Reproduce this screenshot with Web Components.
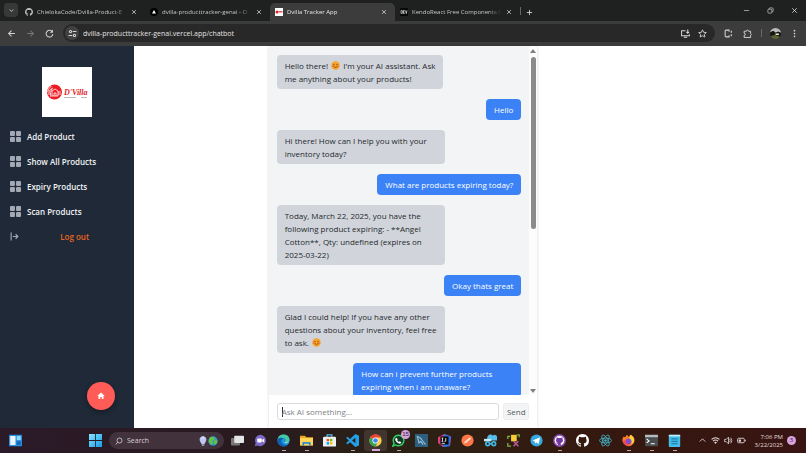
<!DOCTYPE html>
<html lang="en">
<head>
<meta charset="UTF-8">
<meta name="viewport" content="width=device-width, initial-scale=1.0">
<title>Dvilla Tracker App</title>
<style>
    :root {
        --sidebar-color: #1f2937;
        --primary-color: #3b82f6;
        --bot-color: #d1d5db;
        --accent-color: #ff5c57;
    }
    html, body {
        margin: 0;
        height: 100%;
        overflow: hidden;
    }
    body {
        font-family: "Open Sans", "Noto Sans", sans-serif;
        font-size: 8px;
        background: #fff;
    }
</style>
</head>
<body>
<desktop-screen></desktop-screen>

<script>
const icons = {
    down: '<path d="M4 6l4 4 4-4" fill="none" stroke="currentColor" stroke-width="2"/>',
    up: '<path d="M3 10l5-5 5 5" fill="none" stroke="currentColor" stroke-width="1.5"/>',
    github: '<path fill="currentColor" d="M8 0C3.58 0 0 3.58 0 8c0 3.54 2.29 6.53 5.47 7.59.4.07.55-.17.55-.38v-1.49c-2.01.37-2.53-.49-2.69-.94-.09-.23-.48-.94-.82-1.13-.28-.15-.68-.52-.01-.53.63-.01 1.08.58 1.23.82.72 1.21 1.87.87 2.33.66.07-.52.28-.87.51-1.07-1.78-.2-3.64-.89-3.64-3.95 0-.87.31-1.59.82-2.15-.08-.2-.36-1.02.08-2.12 0 0 .67-.21 2.2.82A7.6 7.6 0 0 1 8 3.86c.68 0 1.36.09 2 .27 1.53-1.04 2.2-.82 2.2-.82.44 1.1.16 1.92.08 2.12.51.56.82 1.27.82 2.15 0 3.07-1.87 3.75-3.65 3.95.29.25.54.73.54 1.48v2.2c0 .21.15.46.55.38A8 8 0 0 0 16 8c0-4.42-3.58-8-8-8z"/>',
    desktop: '<circle cx="8" cy="8" r="8" fill="#8446ae"/><circle cx="8" cy="8" r="6" fill="#fff"/><path fill="#7438a0" d="M4.500 4l2 1h3l2-1 .3 2.200c1.200 2.500 0 4.300-2.300 4.800l.3 3h-3.600v-2c-1 .3-2-.2-2.400-1.200l2.600.2c-2.300-.5-3.500-2.300-2.200-4.800z"/>',
    vercel: '<circle cx="8" cy="8" r="8" fill="#000"/><path d="M8 4l4 7H4z" fill="#fff"/>',
    dvilla: '<path fill="#fff" d="M0 0h16v16H0z"/><circle cx="4" cy="8" r="3" fill="#e0222b"/><path d="M7 6h8v3H7z" fill="#dd5560"/>',
    dev: '<rect width="16" height="16" rx="1" fill="#080808"/><path d="M2 5v6h1.500a1.500 1.500 0 0 0 1.500-1.500v-3A1.500 1.500 0 0 0 3.500 5zM9.500 5H7v6h2.500M7 8h2M11 5l1.500 6L14 5" fill="none" stroke="#fff" stroke-width="1.300"/>',
    close: '<path d="M3 3l10 10M13 3L3 13" stroke="currentColor" stroke-width="2"/>',
    plus: '<path d="M8 2v12M2 8h12" stroke="currentColor" stroke-width="2"/>',
    minimize: '<path d="M2 8h12" stroke="currentColor" stroke-width="1.500"/>',
    restore: '<g fill="none" stroke="currentColor" stroke-width="1.500"><rect x="2" y="5" width="9" height="9" rx="2"/><path d="M5 5V4a2 2 0 0 1 2-2h5a2 2 0 0 1 2 2v5a2 2 0 0 1-2 2h-1"/></g>',
    back: '<path d="M14 8H3M8 3L3 8l5 5" fill="none" stroke="currentColor" stroke-width="1.800"/>',
    forward: '<path d="M2 8h11M8 3l5 5-5 5" fill="none" stroke="currentColor" stroke-width="1.800"/>',
    reload: '<path d="M13 5a6 6 0 1 0 1 4" fill="none" stroke="currentColor" stroke-width="1.800"/><path d="M14 1v5.500H8.500z" fill="currentColor"/>',
    tune: '<g fill="none" stroke="currentColor" stroke-width="1.800"><circle cx="4.500" cy="4.500" r="2"/><path d="M8.500 4.500H15M1 11.500h6.500"/><circle cx="11.500" cy="11.500" r="2"/></g>',
    install: '<g fill="none" stroke="currentColor" stroke-width="1.800"><path d="M8 3H1v9h14V9.500M5 14.500h6"/><path d="M12 1v6M9.500 5L12 7.500 14.500 5"/></g>',
    star: '<path d="M8 1.500l2 4.400 4.800.5-3.600 3.200 1 4.700L8 11.900l-4.200 2.400 1-4.700L1.200 6.400 6 5.900z" fill="none" stroke="currentColor" stroke-width="1.600"/>',
    bracket: '<path d="M9 5V2H4a2 2 0 0 0-2 2v8a2 2 0 0 0 2 2h5v-3" fill="none" stroke="currentColor" stroke-width="1.800"/><path d="M13 3v3.500M13 9.500V13" stroke="currentColor" stroke-width="2"/>',
    puzzle: '<path d="M2 4h4a2 2 0 0 1 4 0h3.500v4a2 2 0 0 1 0 3.500V15H2v-3.500a2 2 0 0 0 0-4z" fill="none" stroke="currentColor" stroke-width="1.700"/>',
    avatar: '<clipPath id="a"><circle cx="8" cy="8" r="8"/></clipPath><g clip-path="url(#a)"><path fill="#b9bdbb" d="M0 0h16v7H0z"/><path fill="#17170f" d="M0 6l5-2 3 3 4-2 4 2v9H0z"/><path fill="#5a6432" d="M0 12l7-2 9 3v3H0z"/><path fill="#e7e9e5" d="M8 8h5v2H8z"/></g>',
    dots: '<g fill="currentColor"><circle cx="8" cy="3" r="1.500"/><circle cx="8" cy="8" r="1.500"/><circle cx="8" cy="13" r="1.500"/></g>',
    grid: '<g fill="#a3aab5"><rect width="7.200" height="7.200" rx="1.500"/><rect x="8.800" width="7.200" height="7.200" rx="1.500"/><rect y="8.800" width="7.200" height="7.200" rx="1.500"/><rect x="8.800" y="8.800" width="7.200" height="7.200" rx="1.500"/></g>',
    logout: '<path d="M2 1v14M5 8h9M10 4l4 4-4 4" fill="none" stroke="#a3aab5" stroke-width="2"/>',
    home: '<path d="M8 1l7.500 7H13v6H9.500v-4h-3v4H3V8H.5z" fill="#fff"/>',
    smile: '<circle cx="8" cy="8" r="7.500" fill="#f8a229"/><path d="M4 6.500q1.200-2 2.400 0M9.600 6.500q1.200-2 2.400 0M4.500 9.500q3.500 4 7 0" fill="none" stroke="#6b3d10" stroke-width="1.400"/><circle cx="3" cy="9" r="1.500" fill="#f4733a"/><circle cx="13" cy="9" r="1.500" fill="#f4733a"/>',
    widgets: '<rect y="1" width="16" height="14" rx="1" fill="#2a8fe0"/><path d="M1.500 2.500H8v11H1.500z" fill="#eef6fb"/><path d="M9.500 2.500h5v5h-5z" fill="#8edcff"/><path d="M9.500 9h5v4.500h-5z" fill="#1668bc"/>',
    start: '<linearGradient id="s" x2="1" y2="1"><stop stop-color="#86e5ff"/><stop offset="1" stop-color="#149be8"/></linearGradient><path fill="url(#s)" d="M0 0h7.500v7.500H0zM8.500 0H16v7.500H8.500zM0 8.500h7.500V16H0zM8.500 8.500H16V16H8.500z"/>',
    search: '<circle cx="9" cy="7" r="5" fill="none" stroke="currentColor" stroke-width="1.500"/><path d="M5.500 10.500L1.500 15" stroke="currentColor" stroke-width="1.500"/>',
    bulb: '<path d="M8 0a6 6 0 0 0-4 10l2 3h4l2-3A6 6 0 0 0 8 0z" fill="#bdc6f4"/><path d="M6 13h4v3H6z" fill="#8b8fa8"/><path d="M5 4q3-3 5 0" stroke="#fff" fill="none"/>',
    earth: '<circle cx="8" cy="8" r="7.500" fill="#2c9bd1"/><path d="M3 2l6-1 2 4-4 2 1 4-3 3L1 9zM11 6l4 1-1 5-3 2-2-4z" fill="#69c13c"/>',
    taskview: '<rect y="5" width="11" height="9" rx="1" fill="#777"/><rect x="4" y="2" width="12" height="9" rx="1" fill="#e5e5e5"/>',
    meet: '<path d="M8 1a7 7 0 1 1-4 13L1 15l1-4A7 7 0 0 1 8 1z" fill="#7b68c9"/><rect x="4" y="5.500" width="5.500" height="5" rx="1" fill="#fff"/><path d="M10 7.500l2.500-2v5L10 8.800z" fill="#fff"/>',
    edge: '<circle cx="8" cy="8" r="7.500" fill="#1688d5"/><path d="M.7 7A7.500 7.500 0 0 1 15.500 7c0 3-3 4-6 3 2-2 1-5-2-5C4 5 1 6 .7 7z" fill="#45c9a0"/><path d="M5 8c-1 4 3 7 8 5.600A7.500 7.500 0 0 1 .7 7C2 4 7 4 8 6.500 6.500 6 5.500 6.500 5 8z" fill="#0c5fae"/><path d="M8.500 6.500c-2 1-1 4 2 4H15c-2 1.500-7 1.500-7.500-2z" fill="#dff3f0"/>',
    folder: '<path d="M0 2h6l2 2h8v10H0z" fill="#eaa625"/><path d="M0 5h16v9H0z" fill="#ffd65a"/><path d="M3 10h10v4H3z" fill="#2385d2"/><path d="M5 12h6v2H5z" fill="#ffd65a"/>',
    store: '<path d="M5 4V1h6v3" fill="none" stroke="#55b9ec" stroke-width="1.400"/><rect y="3.500" width="16" height="12" rx="1.500" fill="#eef1f3"/><path d="M4.500 6h3v3h-3z" fill="#ef4f26"/><path d="M8.500 6h3v3h-3z" fill="#7fba00"/><path d="M4.500 10h3v3h-3z" fill="#00a4ef"/><path d="M8.500 10h3v3h-3z" fill="#ffb900"/>',
    vscode: '<path d="M11.500 0L16 2v12l-4.500 2L5 10l-3 2.500L0 11.500 3.500 8 0 4.500l2-1L5 6zM11.500 4.500L7.500 8l4 3.500z" fill="#249fe5" fill-rule="evenodd"/>',
    chrome: '<circle cx="8" cy="8" r="7.500" fill="#ffcd40"/><path d="M8 8L1.500 4.200A7.500 7.500 0 0 1 14.500 4.200H8z" fill="#e94435"/><path d="M8 8L1.500 4.200A7.500 7.500 0 0 0 8 15.500l3.300-5.600z" fill="#34a553"/><circle cx="8" cy="8" r="3.800" fill="#fff"/><circle cx="8" cy="8" r="2.900" fill="#4285f4"/>',
    whatsapp: '<path d="M8 1.500a6.500 6.500 0 1 1-3.400 12L1 15l1.500-3.600A6.500 6.500 0 0 1 8 1.500z" fill="#123b25" stroke="#35cf66" stroke-width="1.700"/><path d="M5.500 4.500l1.500 2-.7 1.200 2 2 1.200-.7 2 1.300c-.5 2-2.200 2-4 .8-2-1.200-4-3.600-3.500-5.400z" fill="#fff"/>',
    mysql: '<path d="M0 0h16v16H0z" fill="#2e5f7f"/><path d="M2 3c4 0 5 2 7 5l4 5M3 4l2 7 2-2 3 4" fill="none" stroke="#9ac3d9" stroke-width="1.300"/>',
    idea: '<path d="M0 4l8-4 8 3-1 11-9 2-6-5z" fill="#e23c78"/><path d="M7 0l9 3-2 12-8 1z" fill="#2876ec"/><path d="M3 3h10v10H3z" fill="#090909"/><path d="M4.500 5h2M5.500 5v4M4.500 9h2M8 9h1.500V5M4.500 11.500h4" stroke="#fff" stroke-width="1" fill="none"/>',
    postman: '<circle cx="8" cy="8" r="7.500" fill="#ff7746"/><path d="M4 12l1-3 6-5 1.500 1.500-5.500 5z" fill="#ffdfd0"/>',
    cloud: '<path d="M4 5a4 4 0 0 1 7-3 3 3 0 0 1 5 3v3H2z" fill="#56bce8"/><path d="M0 6h9v3H0z" fill="#c5e9f5"/><g fill="none" stroke="#43b7e4" stroke-width="2"><circle cx="4.500" cy="12" r="2.300"/><circle cx="12" cy="12" r="2.300"/><path d="M7 12h3"/></g>',
    tools: '<path d="M5 1h7v8H5z" fill="#f3cf35"/><path d="M4 3H1v3M1 11v4h4M12 1h3v3" fill="none" stroke="#7bb343" stroke-width="1.600"/><path d="M8 9l6 6M14 9l-6 6" stroke="#b95c9c" stroke-width="1.800"/>',
    telegram: '<circle cx="8" cy="8" r="7.500" fill="#35a8df"/><path d="M3 8l9.500-4-2 8.500-3-2.200-1.300 1.600-.5-3z" fill="#fff"/>',
    react: '<g fill="none" stroke="#43b6cb" stroke-width="1"><ellipse cx="8" cy="8" rx="7.500" ry="3"/><ellipse cx="8" cy="8" rx="7.500" ry="3" transform="rotate(60 8 8)"/><ellipse cx="8" cy="8" rx="7.500" ry="3" transform="rotate(120 8 8)"/></g><circle cx="8" cy="8" r="1.500" fill="#43b6cb"/>',
    firefox: '<path d="M2 3l2 1 2-3 3 3 2-3c3 2 4.500 4 4.500 7A7.500 7.500 0 1 1 2 3z" fill="#ff7b29"/><path d="M10 1c4 2 5.500 5 4.500 9l-3 3c1-4 0-6-3-8z" fill="#ffd43e"/><circle cx="8" cy="9" r="3.500" fill="#7950cf"/><path d="M1 8c1 6 7 8 11 5-5 1-7-1-7-5z" fill="#f4435a"/>',
    terminal: '<rect y="1" width="16" height="14" rx="1" fill="#484d50"/><path d="M0 1h16v3H0z" fill="#b6babd"/><path d="M2 6l3 2.500L2 11M7 12h5" fill="none" stroke="#fff" stroke-width="1.400"/>',
    notepad: '<rect x="1" y="1" width="14" height="15" rx="1" fill="#43bde9"/><path d="M1 1h14v2H1z" fill="#c8edf8"/><path d="M4 6h8M4 9h8M4 12h8" stroke="#176f9c" stroke-width="1.200"/>',
    wifi: '<g fill="none" stroke="currentColor" stroke-width="1.800"><path d="M1 6q7-6 14 0M3.500 9q4.500-4 9 0"/></g><path d="M5.500 11q2.500-2 5 0L8 14z" fill="currentColor"/>',
    sound: '<g fill="none" stroke="currentColor" stroke-width="1.400"><path d="M1 6h3l4-4v12l-4-4H1zM10 5q2 3 0 6M12 3q4 5 0 10"/></g>',
    battery: '<rect x="1" y="4" width="12" height="8" rx="2" fill="none" stroke="currentColor" stroke-width="1.500"/><path d="M3 6h4v4H3zM14 6.500h1.500v3H14z" fill="currentColor"/>'
};

class UiIcon extends HTMLElement {
    constructor() {
        super();
        this.shadowDOM = this.attachShadow({mode: 'open'});
    }

    connectedCallback() {
        this.shadowDOM.innerHTML = `
            <style>
            :host { display: inline-block; flex: none; width: var(--size, 8px); height: var(--size, 8px); }
            svg { display: block; width: 100%; height: 100%; }
            </style>
            <svg viewBox="0 0 16 16" aria-hidden="true">${icons[this.getAttribute('name')]}</svg>`;
    }
}
customElements.define('ui-icon', UiIcon);

class BrowserTab extends HTMLElement {
    constructor() {
        super();
        this.shadowDOM = this.attachShadow({mode: 'open'});
    }

    connectedCallback() {
        this.shadowDOM.innerHTML = `
            <style>
            :host {
                display: flex;
                align-items: center;
                gap: 4px;
                flex: 0 1 125px;
                min-width: 0;
                height: 18px;
                box-sizing: border-box;
                padding: 0 8px 0 5px;
                border-radius: 5px 5px 0 0;
                color: #c4c6c6;
            }
            :host([active]) { background: #3c3c3c; color: #e8e8e8; }
            span {
                flex: 1;
                overflow: hidden;
                white-space: nowrap;
                mask-image: linear-gradient(90deg, #000 85%, transparent);
            }
            button { border: 0; padding: 0; background: none; color: #d5d5d5; display: flex; --size: 6px; }
            </style>
            <ui-icon name="${this.getAttribute('icon')}"></ui-icon>
            <span><slot></slot></span>
            <button aria-label="Close tab"><ui-icon name="close"></ui-icon></button>`;
    }
}
customElements.define('browser-tab', BrowserTab);

class BrowserBar extends HTMLElement {
    constructor() {
        super();
        this.shadowDOM = this.attachShadow({mode: 'open'});
    }

    connectedCallback() {
        this.shadowDOM.innerHTML = `
            <style>
            * { box-sizing: border-box; }
            :host { display: block; font-size: 6px; color: #d5d5d5; }
            button {
                border: 0;
                padding: 0;
                background: none;
                color: inherit;
                display: flex;
                align-items: center;
                justify-content: center;
            }
            .tabs {
                display: flex;
                align-items: flex-end;
                height: 21px;
                background: #1f2121;
                padding-left: 4px;
            }
            .tabs > button { height: 18px; }
            .tabs .list {
                width: 14px;
                height: 14px;
                border-radius: 4px;
                background: #373939;
                margin: 0 2px 4px 0;
                --size: 7px;
            }
            .new { width: 16px; --size: 7px; }
            .window { display: flex; margin-left: auto; --size: 7px; }
            .window button { width: 24px; height: 21px; }
            .toolbar {
                display: flex;
                align-items: center;
                height: 25px;
                padding: 0 2px 1px;
                background: #3c3c3c;
                --size: 9px;
            }
            .toolbar > button { width: 19px; }
            .off { color: #777; }
            .address {
                flex: 1;
                display: flex;
                align-items: center;
                height: 18px;
                margin: 0 4px;
                padding: 0 8px 0 2px;
                gap: 4px;
                border-radius: 9px;
                background: #282828;
            }
            .address input {
                flex: 1;
                min-width: 0;
                border: 0;
                padding: 0;
                background: none;
                color: #e3e3e3;
                font: inherit;
                font-size: 7px;
                outline: 0;
            }
            .site { width: 14px; height: 14px; border-radius: 50%; background: #414141; }
            .address button + button { margin-left: 4px; }
            .line { width: 1px; height: 8px; background: #666; margin: 0 4px; }
            .tabs .line { margin: 0 0 6px; }
            .me { --size: 11px; }
            </style>
            <div class="tabs">
                <button class="list" aria-label="Search tabs"><ui-icon name="down"></ui-icon></button>
                <browser-tab icon="github">ChielokaCode/Dvilla-Product-E</browser-tab>
                <browser-tab icon="vercel">dvilla-producttracker-genai - O</browser-tab>
                <browser-tab icon="dvilla" active>Dvilla Tracker App</browser-tab>
                <browser-tab icon="dev">KendoReact Free Components C</browser-tab>
                <div class="line"></div>
                <button class="new" aria-label="New tab"><ui-icon name="plus"></ui-icon></button>
                <div class="window">
                    <button aria-label="Minimize"><ui-icon name="minimize"></ui-icon></button>
                    <button aria-label="Restore"><ui-icon name="restore"></ui-icon></button>
                    <button aria-label="Close"><ui-icon name="close"></ui-icon></button>
                </div>
            </div>
            <div class="toolbar">
                <button aria-label="Back"><ui-icon name="back"></ui-icon></button>
                <button class="off" aria-label="Forward"><ui-icon name="forward"></ui-icon></button>
                <button aria-label="Reload"><ui-icon name="reload"></ui-icon></button>
                <div class="address">
                    <button class="site" aria-label="Site information"><ui-icon name="tune"></ui-icon></button>
                    <input aria-label="Address" value="dvilla-producttracker-genai.vercel.app/chatbot">
                    <button aria-label="Install"><ui-icon name="install"></ui-icon></button>
                    <button aria-label="Bookmark"><ui-icon name="star"></ui-icon></button>
                </div>
                <button aria-label="Extension"><ui-icon name="bracket"></ui-icon></button>
                <button aria-label="Extensions"><ui-icon name="puzzle"></ui-icon></button>
                <div class="line"></div>
                <button class="me" aria-label="Profile"><ui-icon name="avatar"></ui-icon></button>
                <button aria-label="Menu"><ui-icon name="dots"></ui-icon></button>
            </div>`;
    }
}
customElements.define('browser-bar', BrowserBar);

class SideBar extends HTMLElement {
    constructor() {
        super();
        this.shadowDOM = this.attachShadow({mode: 'open'});
    }

    connectedCallback() {
        this.shadowDOM.innerHTML = `
            <style>
            :host {
                display: block;
                position: relative;
                background: var(--sidebar-color);
                padding: 21px 10px 0;
                font-weight: 600;
            }
            .logo { display: block; width: 50px; height: 50px; margin: 0 auto 7px; background: #fff; }
            nav { display: flex; flex-direction: column; --size: 11px; }
            a {
                display: flex;
                align-items: center;
                gap: 6px;
                height: 25px;
                color: #f1f3f5;
                text-decoration: none;
            }
            .logout { color: #e8651f; --size: 9px; }
            .logout span { flex: 1; text-align: center; }
            .home {
                position: absolute;
                right: 19px;
                bottom: 18px;
                width: 28px;
                height: 28px;
                border: 0;
                padding: 0;
                border-radius: 50%;
                background: var(--accent-color);
                box-shadow: 0 2px 5px rgba(0, 0, 0, .35);
                display: flex;
                align-items: center;
                justify-content: center;
            }
            </style>
            <svg class="logo" viewBox="0 0 50 50" role="img" aria-label="D'Villa">
                <circle cx="12.500" cy="25" r="7.500" fill="#ed1c24"/>
                <path d="M5.500 25q1-4 4-6M7 28q-1-5 4-7M9 30q-2-5 1-8" fill="none" stroke="#fff" stroke-width=".8"/>
                <path d="M10 24l3-2 3 2v5h-6zM12 29v-3h2v3M16 25h3M16 27h3" fill="none" stroke="#fff" stroke-width=".8"/>
                <text x="22" y="28" font-family="Liberation Serif, serif" font-style="italic" font-weight="700" font-size="8" fill="#e11d26">D'Villa</text>
                <path d="M22 30.500h12M39 30.500h6" stroke="#999" stroke-width=".7"/>
            </svg>
            <nav>
                <a href="#add"><ui-icon name="grid"></ui-icon>Add Product</a>
                <a href="#all"><ui-icon name="grid"></ui-icon>Show All Products</a>
                <a href="#expiry"><ui-icon name="grid"></ui-icon>Expiry Products</a>
                <a href="#scan"><ui-icon name="grid"></ui-icon>Scan Products</a>
                <a href="#logout" class="logout"><ui-icon name="logout"></ui-icon><span>Log out</span></a>
            </nav>
            <button class="home" aria-label="Home"><ui-icon name="home"></ui-icon></button>`;
    }
}
customElements.define('side-bar', SideBar);

class ChatMessage extends HTMLElement {
    constructor() {
        super();
        this.shadowDOM = this.attachShadow({mode: 'open'});
    }

    connectedCallback() {
        this.shadowDOM.innerHTML = `
            <style>
            :host {
                display: block;
                flex: none;
                box-sizing: border-box;
                max-width: 168px;
                padding: 4px 8px;
                border-radius: 4px;
                line-height: 13px;
                background: var(--bot-color);
                color: #25282d;
                align-self: flex-start;
            }
            :host([user]) { background: var(--primary-color); color: #fff; align-self: flex-end; }
            ::slotted(ui-icon) { vertical-align: -1px; margin: 0 1px; --size: 9px; }
            </style>
            <slot></slot>`;
    }
}
customElements.define('chat-message', ChatMessage);

class ChatBox extends HTMLElement {
    constructor() {
        super();
        this.shadowDOM = this.attachShadow({mode: 'open'});
    }

    connectedCallback() {
        this.shadowDOM.innerHTML = `
            <style>
            * { box-sizing: border-box; }
            :host {
                display: flex;
                flex-direction: column;
                min-height: 0;
                background: #fff;
                box-shadow: 0 0 3px rgba(0, 0, 0, .16);
            }
            .history { flex: 1; min-height: 0; display: flex; }
            .list {
                flex: 1;
                display: flex;
                flex-direction: column;
                gap: 10px;
                padding: 9px 8px 0;
                background: #f3f4f6;
                overflow: hidden;
            }
            .scroll {
                width: 8px;
                display: flex;
                flex-direction: column;
                align-items: center;
                padding: 3px 0 2px;
                background: #fcfcfc;
            }
            .scroll i { border: 3px solid transparent; border-top: 0; border-bottom: 4px solid #7f7f7f; }
            .scroll i:last-child { border-top: 4px solid #7f7f7f; border-bottom: 0; }
            .thumb { width: 5px; height: 50%; margin: 4px 0 auto; border-radius: 3px; background: #8b8b8b; }
            form { display: flex; gap: 4px; padding: 8px; height: 33px; }
            input {
                flex: 1;
                min-width: 0;
                height: 17px;
                padding: 0 4px;
                border: 1px solid #d9dbde;
                border-radius: 3px;
                font: inherit;
                background: linear-gradient(#333, #333) 4px 50% / 1px 10px no-repeat #fff;
            }
            input::placeholder { color: #7c7f85; }
            button {
                width: 26px;
                height: 17px;
                padding: 0;
                border: 1px solid #ececee;
                border-radius: 3px;
                background: #f3f4f5;
                color: #55585d;
                font: inherit;
            }
            </style>
            <div class="history">
                <div class="list"><slot></slot></div>
                <div class="scroll"><i></i><div class="thumb"></div><i></i></div>
            </div>
            <form onsubmit="return false">
                <input type="text" aria-label="Message" placeholder="Ask AI something...">
                <button>Send</button>
            </form>`;
    }
}
customElements.define('chat-box', ChatBox);

class TaskApp extends HTMLElement {
    constructor() {
        super();
        this.shadowDOM = this.attachShadow({mode: 'open'});
    }

    connectedCallback() {
        this.shadowDOM.innerHTML = `
            <style>
            :host { display: block; flex: 0 1 23px; --size: 13px; }
            button {
                position: relative;
                display: flex;
                align-items: center;
                justify-content: center;
                width: 100%;
                height: 21px;
                padding: 0;
                border: 0;
                border-radius: 3px;
                background: none;
                color: #fff;
            }
            :host([running]) button::after {
                content: "";
                position: absolute;
                bottom: 0;
                width: 4px;
                height: 1px;
                background: #b5aaa8;
            }
            :host([active]) button { background: rgba(255, 255, 255, .1); }
            :host([active]) button::after { width: 8px; height: 2px; background: #d8a8df; }
            slot { position: absolute; top: 0; right: 0; display: block; }
            </style>
            <button aria-label="${this.getAttribute('icon')}"><ui-icon name="${this.getAttribute('icon')}"></ui-icon><slot></slot></button>`;
    }
}
customElements.define('task-app', TaskApp);

class TaskBar extends HTMLElement {
    constructor() {
        super();
        this.shadowDOM = this.attachShadow({mode: 'open'});
    }

    connectedCallback() {
        this.shadowDOM.innerHTML = `
            <style>
            * { box-sizing: border-box; }
            :host {
                display: flex;
                align-items: center;
                height: 25px;
                padding: 0 10px 0 4px;
                background: linear-gradient(90deg, #2b1a28, #291a20 30%, #2b2115 50%, #34190f 72%, #381412);
                color: #e4dddd;
                font-size: 7px;
            }
            .left { width: 80px; }
            .left task-app { width: 23px; }
            .search {
                display: flex;
                align-items: center;
                width: 115px;
                height: 17px;
                margin: 0 2px;
                padding: 0 6px;
                gap: 4px;
                border-radius: 9px;
                background: #41323c;
            }
            .search input {
                flex: 1;
                min-width: 0;
                border: 0;
                padding: 0;
                background: none;
                font: inherit;
                outline: 0;
            }
            .search input::placeholder { color: #d9d0d5; }
            .art { display: flex; --size: 10px; }
            .badge {
                display: block;
                min-width: 9px;
                height: 9px;
                border-radius: 5px;
                background: #d9a3df;
                color: #35203a;
                font-size: 6px;
                line-height: 9px;
                text-align: center;
            }
            .tray { display: flex; align-items: center; gap: 4px; margin-left: auto; --size: 9px; }
            .clock { width: 33px; text-align: right; line-height: 8px; font-size: 6px; }
            </style>
            <div class="left"><task-app icon="widgets"></task-app></div>
            <task-app icon="start"></task-app>
            <div class="search">
                <ui-icon name="search"></ui-icon>
                <input type="text" aria-label="Search" placeholder="Search">
                <div class="art"><ui-icon name="bulb"></ui-icon><ui-icon name="earth"></ui-icon></div>
            </div>
            <task-app icon="taskview"></task-app>
            <task-app icon="meet"></task-app>
            <task-app icon="edge" running></task-app>
            <task-app icon="folder" running></task-app>
            <task-app icon="store"></task-app>
            <task-app icon="vscode" running></task-app>
            <task-app icon="chrome" running active></task-app>
            <task-app icon="whatsapp" running><span class="badge">15</span></task-app>
            <task-app icon="mysql"></task-app>
            <task-app icon="idea"></task-app>
            <task-app icon="postman"></task-app>
            <task-app icon="cloud"></task-app>
            <task-app icon="tools"></task-app>
            <task-app icon="telegram"></task-app>
            <task-app icon="desktop" running></task-app>
            <task-app icon="github"></task-app>
            <task-app icon="react"></task-app>
            <task-app icon="firefox" running></task-app>
            <task-app icon="terminal" running></task-app>
            <task-app icon="notepad" running></task-app>
            <div class="tray">
                <ui-icon name="up"></ui-icon>
                <ui-icon name="wifi"></ui-icon>
                <ui-icon name="sound"></ui-icon>
                <ui-icon name="battery"></ui-icon>
                <div class="clock">7:06 PM<br>3/22/2025</div>
                <span class="badge">3</span>
            </div>`;
    }
}
customElements.define('task-bar', TaskBar);

class DesktopScreen extends HTMLElement {
    constructor() {
        super();
        this.shadowDOM = this.attachShadow({mode: 'open'});
    }

    connectedCallback() {
        this.shadowDOM.innerHTML = `
            <style>
            :host { display: flex; flex-direction: column; height: 100vh; }
            main {
                flex: 1;
                min-height: 0;
                display: grid;
                grid-template-columns: 1fr 1fr 2fr 2fr;
                grid-template-rows: minmax(0, 1fr);
            }
            chat-box { grid-column: 3; }
            </style>
            <browser-bar></browser-bar>
            <main>
                <side-bar></side-bar>
                <chat-box>
                    <chat-message>Hello there! <ui-icon name="smile"></ui-icon> I'm your AI assistant. Ask<br>me anything about your products!</chat-message>
                    <chat-message user>Hello</chat-message>
                    <chat-message>Hi there! How can I help you with your inventory today?</chat-message>
                    <chat-message user>What are products expiring today?</chat-message>
                    <chat-message>Today, March 22, 2025, you have the following product expiring: - **Angel Cotton**, Qty: undefined (expires on 2025-03-22)</chat-message>
                    <chat-message user>Okay thats great</chat-message>
                    <chat-message>Glad I could help! If you have any other questions about your inventory, feel free to ask. <ui-icon name="smile"></ui-icon></chat-message>
                    <chat-message user>How can i prevent further products expiring when i am unaware?</chat-message>
                </chat-box>
            </main>
            <task-bar></task-bar>`;
    }
}
customElements.define('desktop-screen', DesktopScreen);
</script>
</body>
</html>
